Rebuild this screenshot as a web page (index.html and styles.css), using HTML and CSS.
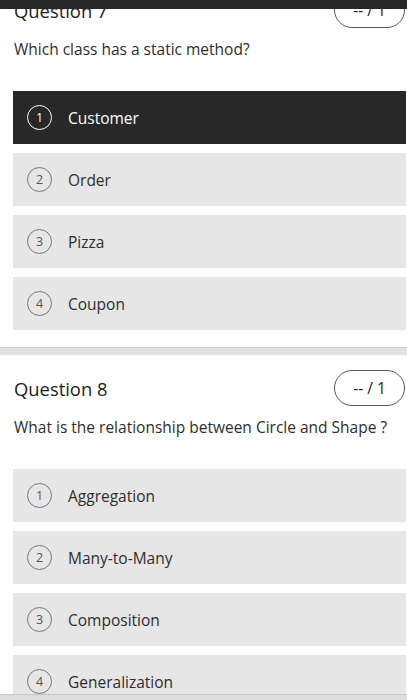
FILE: index.html
```html
<!DOCTYPE html>
<html lang="en">
<head>
  <meta charset="UTF-8" />
  <meta name="viewport" content="width=device-width, initial-scale=1" />
  <title>Quiz</title>
  <link rel="stylesheet" href="styles.css">
</head>
<body>
  <div class="top-bar"></div>

  <main class="quiz">
    <section class="question">
      <div class="question-head">
        <h2>Question 7</h2>
        <span class="points">-- / 1</span>
      </div>
      <p class="prompt">Which class has a static method?</p>
      <ul class="options">
        <li class="option selected"><span class="num">1</span>Customer</li>
        <li class="option"><span class="num">2</span>Order</li>
        <li class="option"><span class="num">3</span>Pizza</li>
        <li class="option"><span class="num">4</span>Coupon</li>
      </ul>
    </section>

    <div class="divider"></div>

    <section class="question">
      <div class="question-head">
        <h2>Question 8</h2>
        <span class="points">-- / 1</span>
      </div>
      <p class="prompt">What is the relationship between Circle and Shape ?</p>
      <ul class="options">
        <li class="option"><span class="num">1</span>Aggregation</li>
        <li class="option"><span class="num">2</span>Many-to-Many</li>
        <li class="option"><span class="num">3</span>Composition</li>
        <li class="option"><span class="num">4</span>Generalization</li>
      </ul>
    </section>
  </main>

  <div class="bottom-bar"></div>
</body>
</html>
```

FILE: styles.css
```css
* {
  margin: 0;
  padding: 0;
  box-sizing: border-box;
}
body {
  font-family: 'Open Sans', 'Noto Sans', sans-serif;
  color: #333;
  background: #fff;
  overflow: hidden;
}
.top-bar {
  position: fixed;
  top: 0;
  left: 0;
  right: 0;
  height: 9px;
  background: #272727;
  z-index: 2;
}
.bottom-bar {
  position: fixed;
  bottom: 0;
  left: 0;
  right: 0;
  height: 6px;
  background: #dcdcdc;
  border-top: 1px solid #c8c8c8;
  z-index: 2;
}
.quiz {
  margin-top: -23px;
}
.question {
  padding: 15px 1px 17px 13px;
}
.question-head {
  display: flex;
  justify-content: space-between;
  align-items: center;
  padding-left: 1px;
  padding-right: 1px;
}
.question-head h2 {
  font-size: 18.4px;
  font-weight: 400;
  color: #222;
}
.points {
  display: flex;
  align-items: center;
  justify-content: center;
  width: 71px;
  height: 36px;
  border: 1px solid #555;
  border-radius: 18px;
  font-size: 15.5px;
  color: #222;
}
.prompt {
  margin-top: 10px;
  padding-left: 1px;
  font-size: 15.5px;
  line-height: 22px;
  color: #2e2e2e;
}
.options {
  list-style: none;
  margin-top: 31px;
  display: flex;
  flex-direction: column;
  gap: 9px;
}
.option {
  display: flex;
  align-items: center;
  gap: 16px;
  height: 53px;
  padding-left: 14px;
  background: #e6e6e6;
  font-size: 15.5px;
  color: #2e2e2e;
}
.option .num {
  display: flex;
  align-items: center;
  justify-content: center;
  width: 25px;
  height: 25px;
  border: 1px solid #777;
  border-radius: 50%;
  font-size: 12.5px;
  color: #555;
}
.option.selected {
  background: #282828;
  color: #fff;
}
.option.selected .num {
  border-color: #fff;
  color: #fff;
}
.divider {
  height: 8px;
  background: #e2e2e2;
  border-top: 1px solid #cfcfcf;
}
```
